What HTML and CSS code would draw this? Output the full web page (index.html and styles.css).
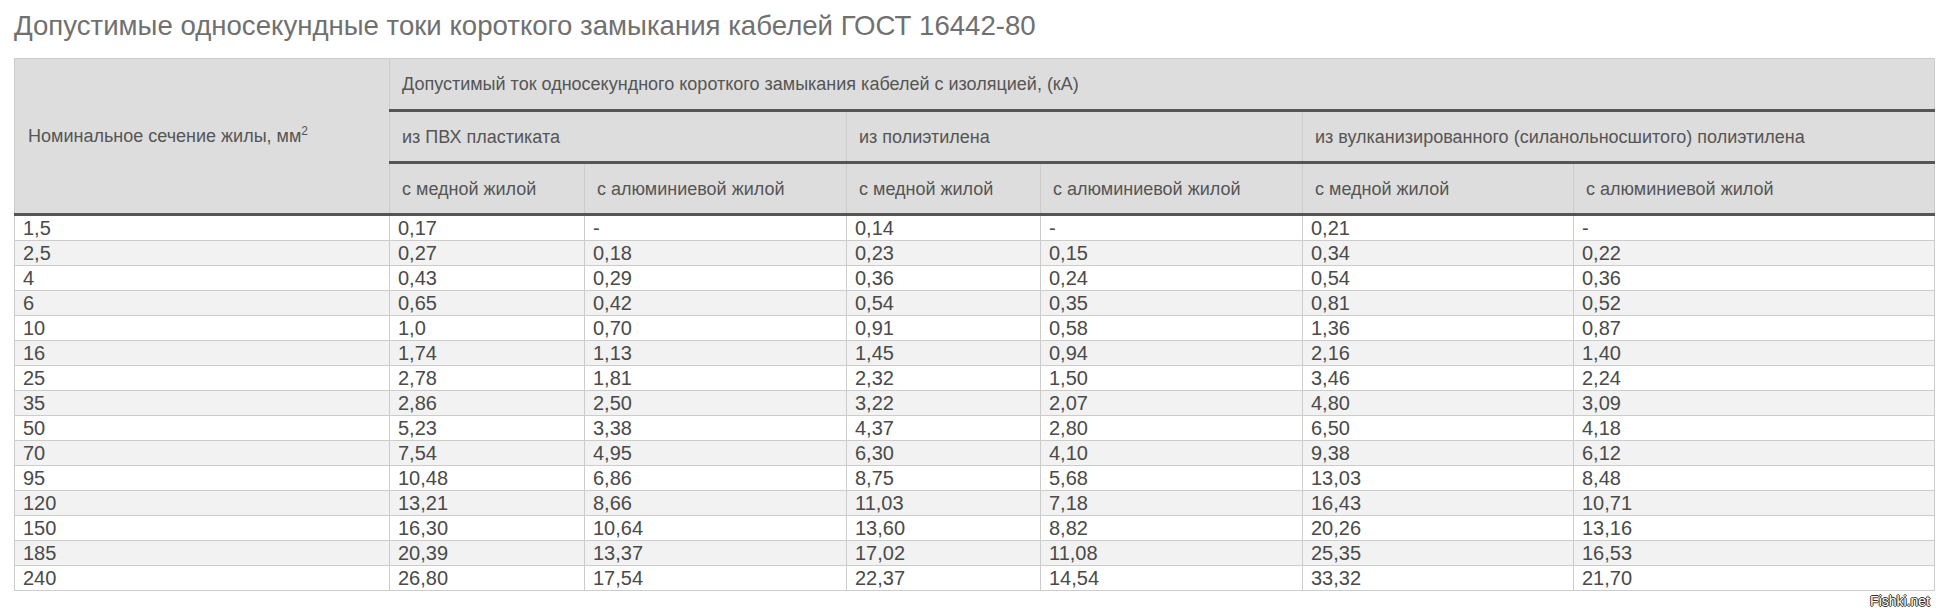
FILE: index.html
```html
<!DOCTYPE html>
<html lang="ru">
<head>
<meta charset="utf-8">
<title>Допустимые односекундные токи короткого замыкания кабелей ГОСТ 16442-80</title>
<link rel="stylesheet" href="styles.css">
</head>
<body>
<div class="page">
  <h1 class="title">Допустимые односекундные токи короткого замыкания кабелей ГОСТ 16442-80</h1>
  <table class="grid">
    <colgroup>
      <col class="c1"><col class="c2"><col class="c3"><col class="c4"><col class="c5"><col class="c6"><col class="c7">
    </colgroup>
    <thead>
      <tr>
        <th rowspan="3" class="th-main">Номинальное сечение жилы, мм<sup>2</sup></th>
        <th colspan="6">Допустимый ток односекундного короткого замыкания кабелей с изоляцией, (кА)</th>
      </tr>
      <tr>
        <th colspan="2">из ПВХ пластиката</th>
        <th colspan="2">из полиэтилена</th>
        <th colspan="2">из вулканизированного (силанольносшитого) полиэтилена</th>
      </tr>
      <tr>
        <th>с медной жилой</th>
        <th>с алюминиевой жилой</th>
        <th>с медной жилой</th>
        <th>с алюминиевой жилой</th>
        <th>с медной жилой</th>
        <th>с алюминиевой жилой</th>
      </tr>
    </thead>
    <tbody>
      <tr><td>1,5</td><td>0,17</td><td>-</td><td>0,14</td><td>-</td><td>0,21</td><td>-</td></tr>
      <tr><td>2,5</td><td>0,27</td><td>0,18</td><td>0,23</td><td>0,15</td><td>0,34</td><td>0,22</td></tr>
      <tr><td>4</td><td>0,43</td><td>0,29</td><td>0,36</td><td>0,24</td><td>0,54</td><td>0,36</td></tr>
      <tr><td>6</td><td>0,65</td><td>0,42</td><td>0,54</td><td>0,35</td><td>0,81</td><td>0,52</td></tr>
      <tr><td>10</td><td>1,0</td><td>0,70</td><td>0,91</td><td>0,58</td><td>1,36</td><td>0,87</td></tr>
      <tr><td>16</td><td>1,74</td><td>1,13</td><td>1,45</td><td>0,94</td><td>2,16</td><td>1,40</td></tr>
      <tr><td>25</td><td>2,78</td><td>1,81</td><td>2,32</td><td>1,50</td><td>3,46</td><td>2,24</td></tr>
      <tr><td>35</td><td>2,86</td><td>2,50</td><td>3,22</td><td>2,07</td><td>4,80</td><td>3,09</td></tr>
      <tr><td>50</td><td>5,23</td><td>3,38</td><td>4,37</td><td>2,80</td><td>6,50</td><td>4,18</td></tr>
      <tr><td>70</td><td>7,54</td><td>4,95</td><td>6,30</td><td>4,10</td><td>9,38</td><td>6,12</td></tr>
      <tr><td>95</td><td>10,48</td><td>6,86</td><td>8,75</td><td>5,68</td><td>13,03</td><td>8,48</td></tr>
      <tr><td>120</td><td>13,21</td><td>8,66</td><td>11,03</td><td>7,18</td><td>16,43</td><td>10,71</td></tr>
      <tr><td>150</td><td>16,30</td><td>10,64</td><td>13,60</td><td>8,82</td><td>20,26</td><td>13,16</td></tr>
      <tr><td>185</td><td>20,39</td><td>13,37</td><td>17,02</td><td>11,08</td><td>25,35</td><td>16,53</td></tr>
      <tr><td>240</td><td>26,80</td><td>17,54</td><td>22,37</td><td>14,54</td><td>33,32</td><td>21,70</td></tr>
    </tbody>
  </table>
  <div class="watermark">Fishki.net</div>
</div>
</body>
</html>
```

FILE: styles.css
```css
html, body {
  margin: 0;
  padding: 0;
  background: #ffffff;
}

.page {
  position: relative;
  width: 1936px;
  height: 615px;
  padding: 10px 0 0 14px;
  box-sizing: border-box;
  font-family: "Liberation Sans", Arial, sans-serif;
}

.title {
  margin: 0 0 16px 0;
  font-size: 27.6px;
  line-height: 32px;
  font-weight: normal;
  color: #707070;
}

.grid {
  border-collapse: collapse;
  table-layout: fixed;
  width: 1921px;
  border: 1px solid #cccccc;
}

.c1 { width: 375px; }
.c2 { width: 195px; }
.c3 { width: 262px; }
.c4 { width: 194px; }
.c5 { width: 262px; }
.c6 { width: 271px; }
.c7 { width: 361px; }

.grid th {
  background: #dddddd;
  color: #555555;
  font-size: 18px;
  font-weight: normal;
  text-align: left;
  line-height: 26px;
  height: 52px;
  padding: 0 12px;
  box-sizing: border-box;
  border-left: 1px solid #cccccc;
  border-right: 1px solid #cccccc;
  border-bottom: 3px solid #555555;
  vertical-align: middle;
  white-space: nowrap;
}

.grid .th-main {
  padding-left: 13px;
}

.grid sup {
  font-size: 12px;
  line-height: 0;
  vertical-align: 7px;
}

.grid td {
  color: #4a4a4a;
  font-size: 20px;
  line-height: 24px;
  padding: 0 8px;
  border: 1px solid #cccccc;
  white-space: nowrap;
}

.grid tbody tr:nth-child(even) td {
  background: #f2f2f2;
}

.watermark {
  position: absolute;
  right: 6px;
  top: 593px;
  font-size: 14px;
  line-height: 16px;
  color: #ffffff;
  text-shadow: -1px 0 #333, 1px 0 #333, 0 -1px #333, 0 1px #333;
}
```
